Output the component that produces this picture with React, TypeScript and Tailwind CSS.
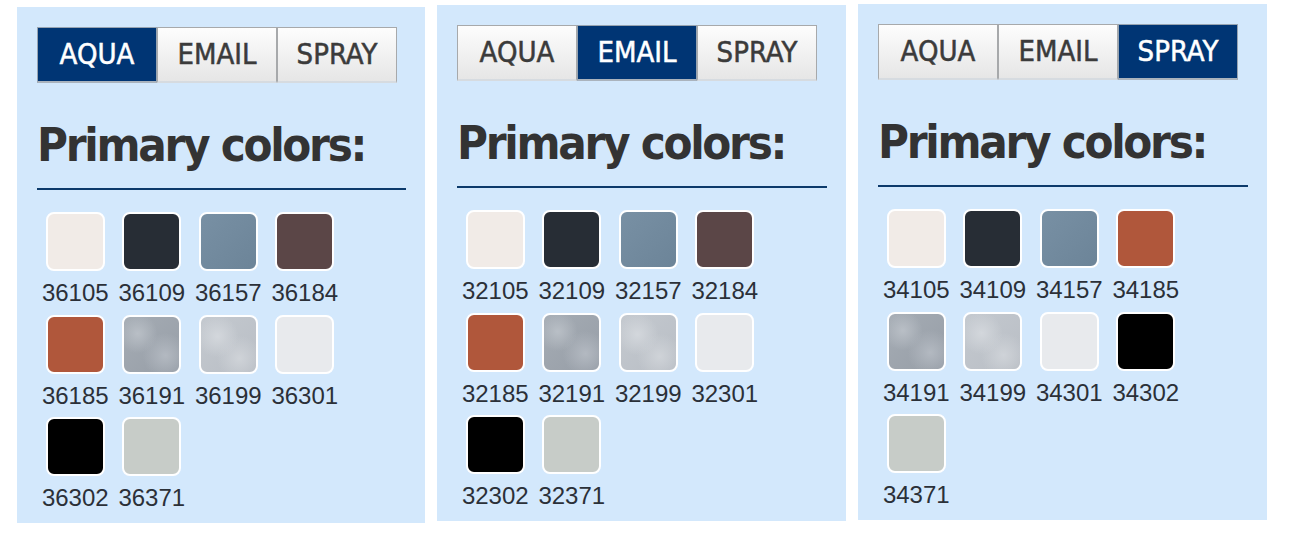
import React from "react";

type Swatch = { code: string; cls: string };

const tabs = ["AQUA", "EMAIL", "SPRAY"];

// swatch fills, keyed by the last three digits of the code
const fills: Record<string, string> = {
  "105": "bg-[#f1ebe7]",
  "109": "bg-[#272d35]",
  "157": "bg-[linear-gradient(135deg,#7890a4,#6c8498)]",
  "184": "bg-[#5b4647]",
  "185": "bg-[#b0573b]",
  "191":
    "bg-[radial-gradient(circle_at_25%_30%,#b9bfc6_0,transparent_35%),radial-gradient(circle_at_75%_70%,#b3b9c1_0,transparent_40%),linear-gradient(135deg,#a5acb4,#979ea7)]",
  "199":
    "bg-[radial-gradient(circle_at_30%_35%,#d3d7dc_0,transparent_40%),radial-gradient(circle_at_70%_75%,#cfd3d8_0,transparent_40%),linear-gradient(135deg,#c4c9cf,#b9bec5)]",
  "301": "bg-[#e8eaed]",
  "302": "bg-[#000000]",
  "371": "bg-[#c7ccc8]",
};

function makeSwatches(prefix: string, suffixes: string[]): Swatch[] {
  return suffixes.map((s) => ({ code: prefix + s, cls: fills[s] }));
}

const panels = [
  {
    active: 0,
    wrap: "ml-[17px] mt-[7px] w-[408px]",
    swatches: makeSwatches("36", ["105", "109", "157", "184", "185", "191", "199", "301", "302", "371"]),
  },
  {
    active: 1,
    wrap: "ml-[12px] mt-[5px] w-[409px]",
    swatches: makeSwatches("32", ["105", "109", "157", "184", "185", "191", "199", "301", "302", "371"]),
  },
  {
    active: 2,
    wrap: "ml-[12px] mt-[4px] w-[409px]",
    swatches: makeSwatches("34", ["105", "109", "157", "185", "191", "199", "301", "302", "371"]),
  },
];

function ColorPanel({ active, wrap, swatches }: { active: number; wrap: string; swatches: Swatch[] }) {
  return (
    <div className={`${wrap} h-[516px] shrink-0 bg-[#d3e8fc] pt-[20px] pl-[20px] pr-[19px]`}>
      {/* Tabs */}
      <div className="flex">
        {tabs.map((t, i) =>
          i === active ? (
            <div
              key={t}
              className="w-[120px] h-[56px] flex items-center justify-center border border-[#98a4b1] border-b-2 border-b-[#aab3bd] bg-[#003574] text-white text-[29px] [-webkit-text-stroke:0.5px_currentColor] font-['DejaVu_Sans_Condensed',sans-serif]"
            >
              {t}
            </div>
          ) : (
            <div
              key={t}
              className="w-[120px] h-[56px] flex items-center justify-center border border-[#a7a9ab] border-b-2 border-b-[#d6dbe0] bg-[linear-gradient(to_bottom,#fdfdfd,#e6e6e6)] text-[#3b3b3b] text-[29px] [-webkit-text-stroke:0.5px_currentColor] font-['DejaVu_Sans_Condensed',sans-serif]"
            >
              {t}
            </div>
          )
        )}
      </div>

      {/* Heading */}
      <h2 className="mt-[37.5px] whitespace-nowrap text-[47px] leading-[47px] font-bold tracking-[-2.3px] text-[#333333] font-['DejaVu_Sans_Condensed',sans-serif]">
        Primary colors:
      </h2>
      <div className="mt-[20.5px] h-[2px] bg-[#0c3a6b]" />

      {/* Swatches */}
      <div className="mt-[22px] grid grid-cols-[repeat(4,76.5px)] gap-y-[7.5px]">
        {swatches.map((s) => (
          <div key={s.code} className="flex flex-col items-center">
            <div className={`w-[59px] h-[59px] rounded-[8px] border-2 border-white ${s.cls}`} />
            <span className="mt-[8px] text-[24px] leading-[28px] text-[#2b3038] font-['Liberation_Sans',sans-serif]">
              {s.code}
            </span>
          </div>
        ))}
      </div>
    </div>
  );
}

export default function App() {
  return (
    <div className="w-[1298px] h-[559px] bg-white flex items-start overflow-hidden">
      {panels.map((p, i) => (
        <ColorPanel key={i} active={p.active} wrap={p.wrap} swatches={p.swatches} />
      ))}
    </div>
  );
}
